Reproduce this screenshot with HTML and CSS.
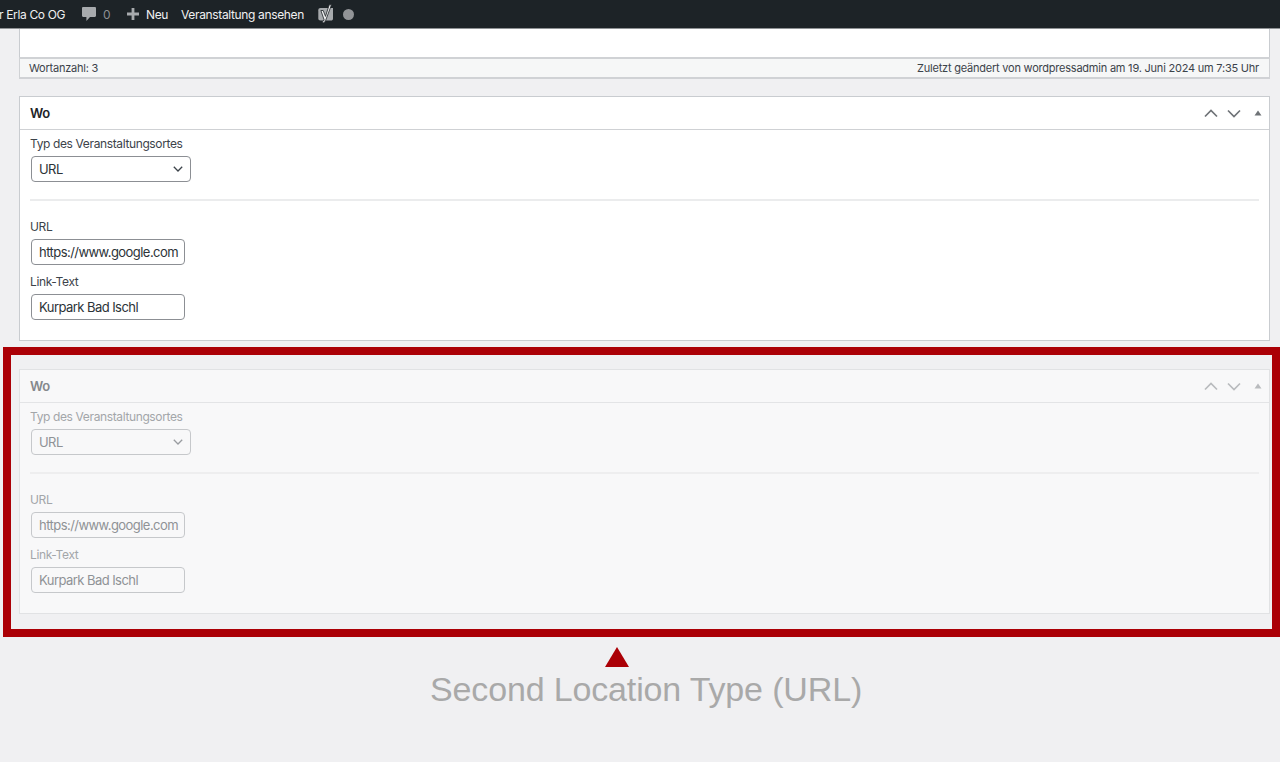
FILE: index.html
```html
<!DOCTYPE html>
<html lang="de">
<head>
<meta charset="utf-8">
<title>Wo</title>
<link rel="stylesheet" href="styles.css">
</head>
<body>
<header class="adminbar">
  <span class="ab-title">r Erla Co OG</span>
  <span class="ab-comments">
    <svg class="ab-icon" width="16" height="16" viewBox="0 0 16 16"><path d="M2.200 1h11.600c.7 0 1.200.5 1.200 1.200v7.600c0 .7-.5 1.200-1.200 1.200H9l-3.600 4v-4H2.200C1.500 11 1 10.500 1 9.800V2.200C1 1.500 1.500 1 2.200 1z" fill="#a7aaad"/></svg>
    <span class="ab-count">0</span>
  </span>
  <span class="ab-new">
    <svg class="ab-icon" width="14" height="14" viewBox="0 0 14 14"><path d="M5.600 1h2.800v4.600H13v2.800H8.400V13H5.600V8.400H1V5.600h4.600z" fill="#a7aaad"/></svg>
    <span>Neu</span>
  </span>
  <span class="ab-view">Veranstaltung ansehen</span>
  <svg class="ab-yoast" width="16" height="20" viewBox="0 0 16 20"><path d="M2.500 4h12.500v10.500c0 1.400-.8 2-2 2H2.500c-1.400 0-2.200-.8-2.200-2V6.200C.3 4.800 1.100 4 2.500 4z" fill="#a7aaad"/><path d="M11.200.8h2.300L7.600 16.500c-.6 1.500-1.600 2.300-2.900 2.600l-.3-1.500c.9-.3 1.500-.8 1.800-1.600L2.900 6.500h2.300l2.300 5.900z" fill="#f0f0f1" stroke="#1d2327" stroke-width=".8"/></svg>
  <span class="ab-dot"></span>
</header>

<main class="page">
  <div class="editor-tail"></div>
  <div class="status">
    <span>Wortanzahl: 3</span>
    <span>Zuletzt geändert von wordpressadmin am 19. Juni 2024 um 7:35 Uhr</span>
  </div>

  <section class="box">
    <div class="box-head">
      <h2 class="box-title">Wo</h2>
      <div class="box-controls">
        <svg class="ctl" width="14" height="9" viewBox="0 0 14 9"><path d="M1 7.500 7 1.500l6 6"/></svg>
        <svg class="ctl" width="14" height="9" viewBox="0 0 14 9"><path d="M1 1.500l6 6 6-6"/></svg>
        <svg class="ctl-tri" width="8" height="6" viewBox="0 0 8 6"><path d="M4 0.500 7.500 5.500H.5z"/></svg>
      </div>
    </div>
    <div class="box-body">
      <label class="lbl">Typ des Veranstaltungsortes</label>
      <div class="select"><span>URL</span><svg width="10" height="6" viewBox="0 0 10 6"><path d="M.8.800 5 5 9.200.8" fill="none" stroke="#3c434a" stroke-width="1.300"/></svg></div>
      <hr class="rule">
      <label class="lbl">URL</label>
      <div class="field">https://www.google.com</div>
      <label class="lbl lbl-gap">Link-Text</label>
      <div class="field">Kurpark Bad Ischl</div>
    </div>
  </section>

  <div class="frame">
    <section class="box ghost">
      <div class="box-head">
        <h2 class="box-title">Wo</h2>
        <div class="box-controls">
          <svg class="ctl" width="14" height="9" viewBox="0 0 14 9"><path d="M1 7.500 7 1.500l6 6"/></svg>
          <svg class="ctl" width="14" height="9" viewBox="0 0 14 9"><path d="M1 1.500l6 6 6-6"/></svg>
          <svg class="ctl-tri" width="8" height="6" viewBox="0 0 8 6"><path d="M4 0.500 7.500 5.500H.5z"/></svg>
        </div>
      </div>
      <div class="box-body">
        <label class="lbl">Typ des Veranstaltungsortes</label>
        <div class="select"><span>URL</span><svg width="10" height="6" viewBox="0 0 10 6"><path d="M.8.800 5 5 9.200.8" fill="none" stroke="#3c434a" stroke-width="1.300"/></svg></div>
        <hr class="rule">
        <label class="lbl">URL</label>
        <div class="field">https://www.google.com</div>
        <label class="lbl lbl-gap">Link-Text</label>
        <div class="field">Kurpark Bad Ischl</div>
      </div>
    </section>
  </div>

  <div class="pointer"></div>
  <p class="caption">Second Location Type (URL)</p>
</main>
</body>
</html>
```
FILE: styles.css
```css
* { box-sizing: border-box; }
html, body { margin: 0; padding: 0; }
body {
  width: 1280px;
  height: 762px;
  overflow: hidden;
  background: #f0f0f2;
  color: #1d2327;
  font-family: Inter, "Liberation Sans", sans-serif;
  font-size: 12px;
}
.adminbar {
  height: 29px;
  background: #1d2327;
  border-bottom: 1px solid #8f9295;
  color: #f0f0f1;
  display: flex;
  align-items: center;
  font-size: 12px;
  letter-spacing: -.35px;
  white-space: nowrap;
  overflow: hidden;
}
.ab-title { margin-left: -1px; width: 82px; flex: none; }
.ab-comments { display: flex; align-items: center; gap: 6px; width: 45px; flex: none; }
.ab-count { color: #8c8f94; }
.ab-new { display: flex; align-items: center; gap: 6px; width: 55px; flex: none; }
.ab-view { width: 137px; flex: none; }
.ab-yoast { flex: none; }
.ab-dot { width: 11px; height: 11px; border-radius: 50%; background: #929497; margin-left: 9px; flex: none; }

.page { display: flex; flex-direction: column; }
.editor-tail {
  height: 28px;
  margin: 0 10px 0 19px;
  background: #fff;
  border-left: 1px solid #c9ccd0;
  border-right: 1px solid #c9ccd0;
}
.status {
  height: 22px;
  margin: 0 10px 0 19px;
  padding: 0 10px 0 9px;
  background: #f6f7f7;
  border: 1px solid #d0d2d5;
  border-top-width: 2px;
  border-bottom-width: 2px;
  display: flex;
  align-items: center;
  justify-content: space-between;
  font-size: 11px;
  letter-spacing: -.22px;
  color: #3c434a;
}
.box {
  margin: 17px 10px 0 19px;
  height: 245px;
  background: #fff;
  border: 1px solid #c9ccd0;
}
.box-head {
  height: 33px;
  padding: 0 7px 0 10px;
  border-bottom: 1px solid #cfd1d4;
  display: flex;
  align-items: center;
  justify-content: space-between;
}
.box-title { margin: 0; font-size: 13px; font-weight: 600; letter-spacing: -.3px; color: #1d2327; }
.box-controls { display: flex; align-items: center; }
.ctl { fill: none; stroke: #6f7377; stroke-width: 1.700; margin-right: 9px; }
.ctl-tri { fill: #6f7377; margin-left: 4px; }
.box-body { padding: 6px 10px 0; }
.lbl { display: block; height: 16px; line-height: 16px; font-size: 12px; letter-spacing: -.37px; color: #3c434a; }
.lbl-gap { margin-top: 9px; }
.select, .field {
  margin: 4px 0 0 1px;
  height: 26px;
  background: #fff;
  border: 1px solid #8c8f94;
  border-radius: 4px;
  display: flex;
  align-items: center;
  padding: 0 7px;
  font-size: 13px;
  letter-spacing: -.55px;
  color: #2c3338;
  white-space: nowrap;
}
.select { width: 160px; justify-content: space-between; }
.field { width: 154px; }
.rule { margin: 17px 0 18px; border: 0; border-top: 2px solid #ebeced; height: 0; }

.frame {
  margin: 6px 0 0 3px;
  width: 1277px;
  height: 290px;
  border: 8px solid #ab0006;
  padding: 14px 0 0 8px;
}
.frame .box { margin: 0; width: 1251px; background: #f8f8f9; border-color: #e1e2e4; }
.ghost .box-head { border-bottom-color: #e3e4e6; }
.ghost .box-title { color: #85888c; }
.ghost .ctl { stroke: #b9bbbe; }
.ghost .ctl-tri { fill: #b9bbbe; }
.ghost .lbl { color: #a3a6a9; }
.ghost .select, .ghost .field { background: #f8f8f9; border-color: #c6c8cb; color: #8f9296; }
.ghost .select svg { opacity: .5; }
.ghost .rule { border-top-color: #eeeeef; }

.pointer {
  width: 0;
  height: 0;
  margin: 10px 0 0 605px;
  border-left: 12px solid transparent;
  border-right: 12px solid transparent;
  border-bottom: 20px solid #ab0006;
}
.caption {
  margin: 0 0 0 430px;
  font-family: "Liberation Sans", Arial, sans-serif;
  font-size: 34px;
  letter-spacing: -.15px;
  line-height: 44px;
  color: #a9a9a9;
  white-space: nowrap;
}
```
